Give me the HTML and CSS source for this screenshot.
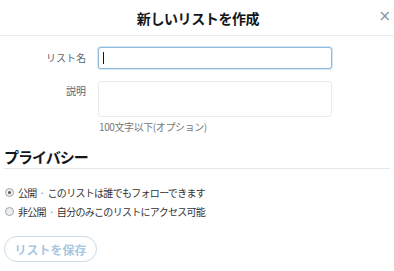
FILE: index.html
```html
<!DOCTYPE html>
<html lang="ja">
<head>
    <meta charset="UTF-8">
    <title>新しいリストを作成</title>
    <link rel="stylesheet" href="styles.css">
</head>
<body>
    <!-- ヘッダー -->
    <div class="modal-header">
        <h3 class="modal-title">新しいリストを作成</h3>
        <button class="close-btn">&times;</button>
    </div>

    <!-- フォーム -->
    <div class="form">
        <div class="field">
            <label class="field-label">リスト名</label>
            <div class="field-body input-wrap">
                <input class="text-input is-focus" type="text">
                <span class="caret"></span>
            </div>
        </div>
        <div class="field field-top">
            <label class="field-label">説明</label>
            <div class="field-body">
                <textarea class="text-area"></textarea>
                <p class="help">100文字以下(オプション)</p>
            </div>
        </div>
    </div>

    <!-- プライバシー -->
    <div class="privacy">
        <h2 class="privacy-title">プライバシー</h2>
        <label class="radio"><span class="radio-dot checked"></span>公開<span class="sep">·</span>このリストは誰でもフォローできます</label>
        <label class="radio"><span class="radio-dot"></span>非公開<span class="sep">·</span>自分のみこのリストにアクセス可能</label>
        <button class="save-btn">リストを保存</button>
    </div>
</body>
</html>
```

FILE: styles.css
```css
body {
    margin: 0;
    background: #fff;
    font-family: "Noto Sans CJK JP", "Liberation Sans", sans-serif;
    color: #292f33;
    width: 394px;
    overflow: hidden;
}

/* ヘッダー */
.modal-header {
    height: 35px;
    border-bottom: 1px solid #e6ecf0;
    display: flex;
    justify-content: center;
    align-items: center;
    position: relative;
}
.modal-title {
    margin: 0 0 0 2px;
    font-size: 14px;
    font-weight: 700;
    color: #14171a;
    line-height: 18px;
    letter-spacing: -0.4px;
}
.close-btn {
    position: absolute;
    right: 3px;
    top: 7px;
    border: none;
    background: none;
    color: #8a959d;
    font-size: 15px;
    line-height: 18px;
    padding: 0;
    font-family: "DejaVu Sans", sans-serif;
}

/* フォーム */
.form {
    padding-top: 11px;
}
.field {
    display: flex;
    align-items: center;
    margin-bottom: 12px;
}
.field-top {
    align-items: flex-start;
}
.field-label {
    width: 86px;
    padding-right: 12px;
    text-align: right;
    font-size: 10px;
    color: #5b6670;
    line-height: 14px;
}
.field-top .field-label {
    padding-top: 3px;
}
.field-body {
    width: 234px;
}
.input-wrap {
    position: relative;
}
.text-input {
    display: block;
    box-sizing: border-box;
    width: 234px;
    height: 22px;
    border: 1px solid #e1e8ed;
    border-radius: 3px;
    margin: 0;
    padding: 0 4px;
}
.text-input.is-focus {
    border-color: #8fbadb;
    box-shadow: 0 0 0 1px #d3e6f4;
}
/* 入力カーソル */
.caret {
    position: absolute;
    left: 5px;
    top: 5px;
    width: 1px;
    height: 12px;
    background: #14171a;
}
.text-area {
    display: block;
    box-sizing: border-box;
    width: 234px;
    height: 36px;
    border: 1px solid #e6ecf0;
    border-radius: 3px;
    margin: 0;
    resize: none;
}
.help {
    margin: 3px 0 0 1px;
    font-size: 10px;
    line-height: 14px;
    color: #777;
    letter-spacing: -0.4px;
}

/* プライバシー */
.privacy {
    padding: 0 4px;
}
.privacy-title {
    margin: 0;
    padding-top: 2px;
    padding-bottom: 3px;
    font-size: 15px;
    font-weight: 700;
    line-height: 17px;
    color: #14171a;
    letter-spacing: -1px;
    border-bottom: 1px solid #e1e8ed;
}
.privacy-title + .radio {
    margin-top: 14px;
}
.radio {
    display: flex;
    align-items: center;
    height: 19px;
    line-height: 19px;
    font-size: 10px;
    color: #333;
    padding-left: 1px;
    letter-spacing: -0.7px;
}
.sep {
    color: #888;
    margin: 0 3px;
}
.radio-dot {
    flex: none;
    width: 7px;
    height: 7px;
    border: 1px solid #a0a6aa;
    border-radius: 50%;
    background: #eceff1;
    margin-right: 4px;
    position: relative;
}
.radio-dot.checked::after {
    content: "";
    position: absolute;
    left: 2px;
    top: 2px;
    width: 3px;
    height: 3px;
    border-radius: 50%;
    background: #555;
}
.save-btn {
    margin-top: 15px;
    width: 93px;
    height: 26px;
    border: 1px solid #c9dbe8;
    border-radius: 14px;
    background: #fff;
    color: #a9c8df;
    font-size: 12px;
    font-weight: 700;
    font-family: "Noto Sans CJK JP", sans-serif;
    padding: 0;
}
```
